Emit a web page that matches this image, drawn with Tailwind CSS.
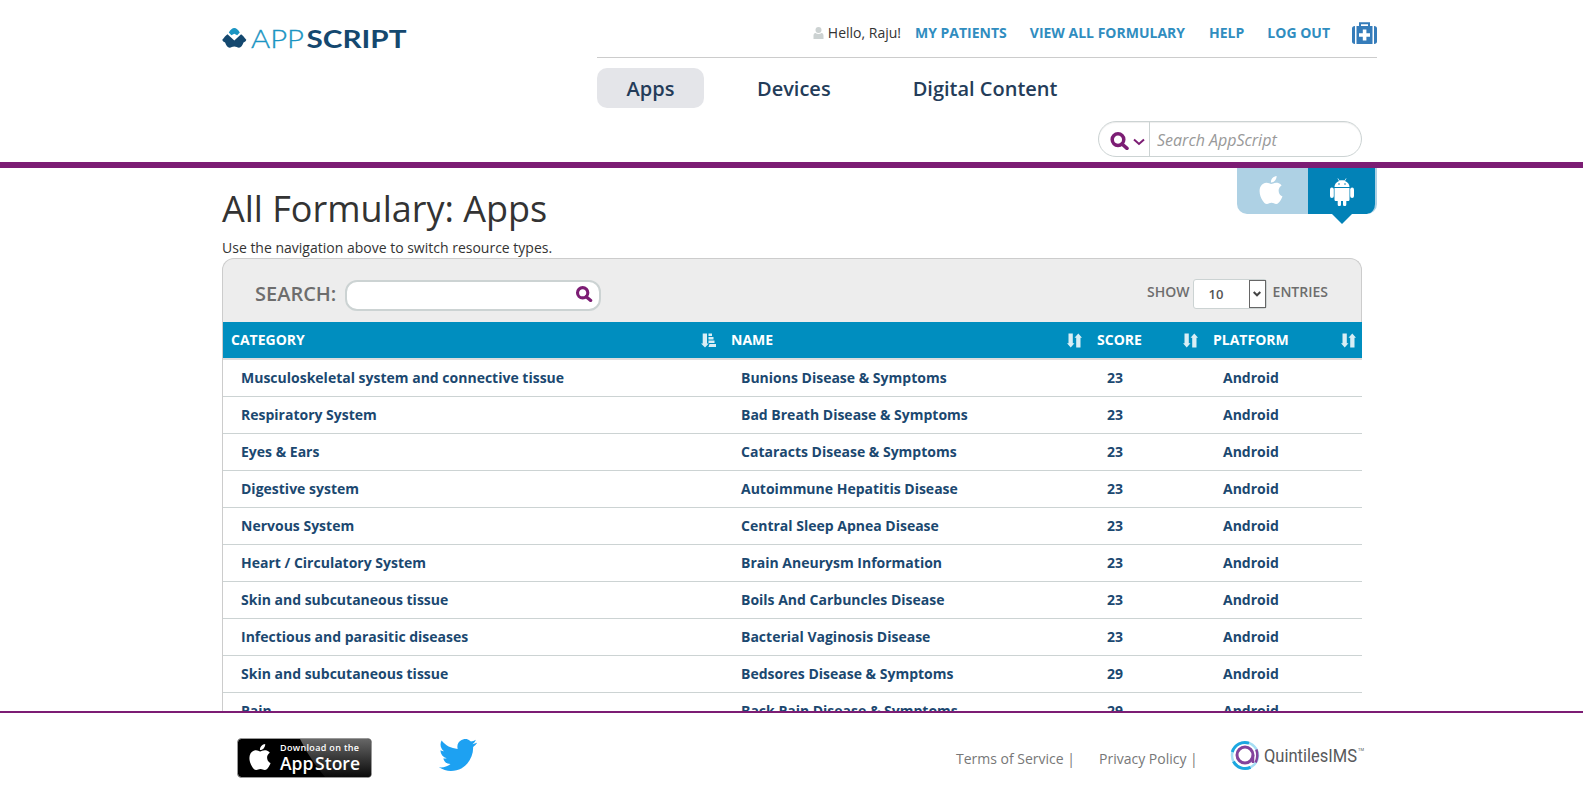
<!DOCTYPE html>
<html lang="en">
<head>
<meta charset="utf-8">
<title>AppScript - All Formulary</title>
<script src="https://cdn.jsdelivr.net/npm/@tailwindcss/browser@4"></script>
</head>
<body class="flex h-screen flex-col overflow-hidden bg-white font-['Open_Sans',sans-serif] text-sm text-[#333]">
<svg class="hidden">
  <symbol id="apple" viewBox="2 0 20 24"><path d="M12.152 6.896c-.948 0-2.415-1.078-3.96-1.04-2.04.027-3.91 1.183-4.961 3.014-2.117 3.675-.546 9.103 1.519 12.09 1.013 1.454 2.208 3.09 3.792 3.039 1.52-.065 2.09-.987 3.935-.987 1.831 0 2.35.987 3.96.948 1.637-.026 2.676-1.48 3.676-2.948 1.156-1.688 1.636-3.325 1.662-3.415-.039-.013-3.182-1.221-3.22-4.857-.026-3.04 2.48-4.494 2.597-4.559-1.429-2.09-3.623-2.324-4.39-2.376-2-.156-3.675 1.09-4.61 1.09zM15.53 3.83c.843-1.012 1.4-2.427 1.245-3.83-1.207.052-2.662.805-3.532 1.818-.78.896-1.454 2.338-1.273 3.714 1.338.104 2.715-.688 3.559-1.701"/></symbol>
  <symbol id="search" viewBox="0 0 19 18"><circle cx="8" cy="7.6" r="5.8" fill="none" stroke="currentColor" stroke-width="3.5"/><path d="M12 12l5 4.300" stroke="currentColor" stroke-width="3.600" stroke-linecap="round"/></symbol>
  <symbol id="sort" viewBox="0 0 15 15"><path d="M1.500.5h4.300v9.700h1.700L3.700 14.500 0 10.200h1.500zM9.200 14.500h4.300V4.800H15L11.300.5 7.500 4.800h1.700z" fill="currentColor"/></symbol>
  <symbol id="sorted" viewBox="0 0 15 15"><path d="M1.700.5H6v10h1.800L4 14.500 0 10.500h1.700zM7.500.5H11v2.500H7.500zM7.500 4h5v2.500h-5zM7.500 7.500h6V10h-6zM8.500 11H15v3H7.500z" fill="currentColor"/></symbol>
</svg>

<header class="h-[168px] shrink-0 border-b-6 border-[#7c1d74]">
  <div class="mx-auto flex w-[1171px] justify-between pl-4">
    <svg class="mt-[26px] h-6 w-[194px]" viewBox="0 0 194 24">
      <path d="M6.800 6.500C8.500 3.500 10.300 2 12.300 2s3.800 1.500 5.500 4.500l-2.600 2.800-2.900-1.500-2.900 1.500z" fill="#1b95c3"/>
      <path d="M5.500 8.200L12.300 14.500l6.800-6.300c1.500 1 3.500 3.300 5.200 5.600-.3 1.700-1.500 1.800-2.800 2.800-1 2.800-2.600 5.200-4.500 5.200-1.600 0-2.800-1.200-4.700-1.200s-3.100 1.200-4.700 1.200c-1.900 0-3.500-2.400-4.500-5.200C1.800 15.600.6 15.500.3 13.800 2 11.500 4 9.200 5.500 8.200z" fill="#14486f"/>
      <text x="29" y="21.500" textLength="53" lengthAdjust="spacingAndGlyphs" font-family="Lato" font-weight="300" font-size="25" fill="#1b95c3" stroke="#1b95c3" stroke-width=".3">APP</text>
      <text x="84.500" y="21.500" textLength="100" lengthAdjust="spacingAndGlyphs" font-family="Lato" font-weight="700" font-size="25" fill="#14486f">SCRIPT</text>
    </svg>
    <div class="w-[780px]">
      <div class="flex h-[58px] items-center justify-end border-b border-[#ccc] pt-2 font-bold text-[#308dbf]">
        <svg class="mr-1 h-3 w-[11px]" viewBox="0 0 10 12" fill="#ccd2d2"><circle cx="5" cy="3" r="3"/><path d="M0 12V8.500C0 6.500 1.500 6 2 6c1.500 1.400 4.500 1.400 6 0 .5 0 2 .5 2 2.500V12z"/></svg>
        <span class="mr-[14px] font-normal text-[#333]">Hello, Raju!</span>
        <a class="mr-[23px]">MY PATIENTS</a><a class="mr-6">VIEW ALL FORMULARY</a><a class="mr-[23px]">HELP</a><a>LOG OUT</a>
        <svg class="ml-[22px] h-[22px] w-[25px]" viewBox="0 0 25 22"><path d="M8 5V1.200h9V5" fill="none" stroke="#357cba" stroke-width="2"/><path d="M3 4v18C1 22 0 21 0 19.500V6.500C0 5 1 4 3 4zM4.500 4h16v18h-16zM22 4c2 0 3 1 3 2.500v13c0 1.500-1 2.500-3 2.500z" fill="#357cba"/><path d="M10.800 7.500h3.600v3.700H18v3.600h-3.600v3.700h-3.600v-3.700H7v-3.600h3.800z" fill="#fff"/></svg>
      </div>
      <nav class="mt-[10px] flex h-10 items-center text-xl font-semibold text-[#243c59]">
        <a class="flex h-10 w-[107px] items-center justify-center rounded-[10px] bg-[#e4e5e9] pt-0.5">Apps</a>
        <a class="ml-[53px] pt-0.5">Devices</a><a class="ml-[82px] pt-0.5">Digital Content</a>
      </nav>
      <div class="mt-[13px] ml-[501px] flex h-9 w-[264px] items-center rounded-[18px] border border-[#ccd3d3] shadow-[inset_0_1px_1px_#eee]">
        <svg class="ml-[11px] mt-[3px] h-[18px] w-[19px] text-[#7c1d74]"><use href="#search"/></svg>
        <svg class="ml-1 mt-1.5 h-[8px] w-[12px]" viewBox="0 0 12 8"><path d="M1 1.500l5 4.500 5-4.500" fill="none" stroke="#7c1d74" stroke-width="2"/></svg>
        <span class="ml-[4px] flex h-full items-center border-l border-[#ccd3d3] pl-[7px] pt-0.5 text-base italic text-[#999]">Search AppScript</span>
      </div>
    </div>
  </div>
</header>

<main class="mx-auto min-h-0 w-[1171px] flex-1 overflow-hidden pl-4">
  <div class="flex h-[90px] justify-between">
    <div>
      <h1 class="mt-[21px] text-4xl leading-10">All Formulary: Apps</h1>
      <p class="mt-[9px] leading-5">Use the navigation above to switch resource types.</p>
    </div>
    <div class="flex h-[56px] w-[140px]">
      <div class="flex h-[46px] w-[71px] items-center justify-center rounded-bl-[10px] bg-[#aed1e4] text-white"><svg class="mr-1 mb-0.5 h-[28px] w-6" fill="#fff"><use href="#apple"/></svg></div>
      <div class="relative flex h-[46px] w-[69px] items-center justify-center rounded-br-[10px] border-r-2 border-[#aed1e4] bg-[#0282b7]">
        <svg class="mt-[2px] h-[28px] w-6" viewBox="0 0 24 28" fill="#fff"><path d="M4.500 9c0-3 2-5 4.500-6L7.500.5l.5-.3L9.500 2.600c1.500-.6 3.500-.6 5 0L16 .2l.5.3L15 3c2.500 1 4.500 3 4.500 6zM4.500 10h15v11.500c0 1-.7 1.500-1.500 1.500h-1.700v3.500a1.500 1.500 0 01-3.300 0V23h-2v3.500a1.500 1.500 0 01-3.300 0V23H6c-.8 0-1.500-.5-1.500-1.500z"/><rect y="9.500" width="3.800" height="10.500" rx="1.900"/><rect x="20.200" y="9.500" width="3.800" height="10.500" rx="1.900"/><circle cx="9" cy="6" r=".8" fill="#0282b7"/><circle cx="15" cy="6" r=".8" fill="#0282b7"/></svg>
        <svg class="absolute left-[24px] top-[46px] h-[10px] w-5" viewBox="0 0 20 10"><path d="M0 0h20L10 10z" fill="#0282b7"/></svg>
      </div>
    </div>
  </div>

  <section class="w-[1140px]">
    <div class="flex h-16 items-center justify-between rounded-t-[12px] border-x border-t border-[#ccc] bg-[#ededed] pl-8 pr-[33px] font-semibold text-[#6d6d6d]">
      <div class="flex items-center pt-[9px]">
        <label class="text-xl leading-6 -mt-[3px]">SEARCH:</label>
        <div class="ml-[9px] flex h-[31px] w-[256px] items-center justify-end rounded-[12px] border-2 border-[#ccd3d3] bg-white pr-1.5"><svg class="mb-0.5 h-4 w-[18px] text-[#7c1d74]"><use href="#search"/></svg></div>
      </div>
      <div class="flex items-center pt-[6px]">
        <span class="-mt-[3px]">SHOW</span>
        <div class="ml-[3px] mr-[6px] flex h-[30px] w-[74px] items-center justify-between rounded-[3px] border border-[#ccd3d3] bg-white pl-[15px] text-[13px] text-[#555]"><span class="pt-0.5">10</span><span class="flex h-[28px] w-[17px] items-center justify-center border border-[#666] bg-white"><svg class="h-[6px] w-[8px]" viewBox="0 0 8 6"><path d="M.7 1L4 4.300 7.300 1" fill="none" stroke="#444" stroke-width="2"/></svg></span></div>
        <span class="-mt-[3px]">ENTRIES</span>
      </div>
    </div>
    <div class="border-l border-[#ccc]">
      <div class="grid h-[38px] grid-cols-[500px_366px_116px_1fr] items-center border-b-2 border-[#ddd] bg-[#008ebf] font-bold text-white">
        <div class="flex items-center justify-between pl-2 pr-[7px]">CATEGORY<svg class="h-[15px] w-[15px] opacity-85"><use href="#sorted"/></svg></div>
        <div class="flex items-center justify-between pl-2 pr-[7px]">NAME<svg class="h-[15px] w-[15px] opacity-85"><use href="#sort"/></svg></div>
        <div class="flex items-center justify-between pl-2 pr-[7px]">SCORE<svg class="h-[15px] w-[15px] opacity-85"><use href="#sort"/></svg></div>
        <div class="flex items-center justify-between pl-2 pr-[6px]">PLATFORM<svg class="h-[15px] w-[15px] opacity-85"><use href="#sort"/></svg></div>
      </div>
      <div id="rows" class="font-bold text-[#1b4870]"></div>
    </div>
  </section>
</main>

<footer class="h-[80px] shrink-0 border-t-2 border-[#7c1d74] bg-white">
  <div class="mx-auto flex w-[1171px] items-start pl-[31px] text-[#777]">
    <svg class="mt-[25px] h-10 w-[135px]" viewBox="0 0 135 40">
      <defs><linearGradient id="gloss" x1="0" y1="0" x2="0" y2="1"><stop offset="0" stop-color="#666"/><stop offset="1" stop-color="#0a0a0a"/></linearGradient></defs>
      <rect x=".5" y=".5" width="134" height="39" rx="4" fill="#000" stroke="#999"/>
      <path d="M63 1h68q3 0 3 3v32q0 3-3 3H88Q72 20 63 1z" fill="url(#gloss)"/>
      <use href="#apple" x="12" y="6" width="22" height="26" fill="#fff"/>
      <text x="43" y="13" textLength="79" font-family="Open Sans" font-weight="600" font-size="9" fill="#fff">Download on the</text>
      <text x="43" y="32" textLength="80" lengthAdjust="spacingAndGlyphs" font-family="Open Sans" font-weight="600" font-size="18.500" word-spacing="-3" fill="#fff">App Store</text>
    </svg>
    <svg class="mt-[26px] ml-[67px] h-[32px] w-[38px]" viewBox="0 2.200 24 19.600" preserveAspectRatio="none" fill="#1da1f2"><path d="M23.953 4.570a10 10 0 01-2.825.775 4.958 4.958 0 002.163-2.723c-.951.555-2.005.959-3.127 1.184a4.920 4.920 0 00-8.384 4.482C7.690 8.095 4.067 6.130 1.640 3.162a4.822 4.822 0 00-.666 2.475c0 1.710.870 3.213 2.188 4.096a4.904 4.904 0 01-2.228-.616v.060a4.923 4.923 0 003.946 4.827 4.996 4.996 0 01-2.212.085 4.936 4.936 0 004.604 3.417 9.867 9.867 0 01-6.102 2.105c-.390 0-.779-.023-1.170-.067a13.995 13.995 0 007.557 2.209c9.053 0 13.998-7.496 13.998-13.985 0-.210 0-.420-.015-.630A9.935 9.935 0 0024 4.590z"/></svg>
    <span class="ml-[479px] mt-[36px]">Terms of Service |</span>
    <span class="ml-[24px] mt-[36px]">Privacy Policy |</span>
    <svg class="ml-[32px] mt-[27px] h-[32px] w-[136px] shrink-0" viewBox="0 0 136 32">
      <g fill="none"><circle cx="15" cy="15.500" r="13" stroke="#a5def4" stroke-width="2.500"/><path d="M2.300 12A13 13 0 0119 3.200M3.500 21.500A13 13 0 0020.500 27.300" stroke="#1ca7e0" stroke-width="3"/><circle cx="15" cy="15" r="8" stroke="#83439b" stroke-width="3"/><path d="M23 15v8M26.300 9.500c1.500 4 1.300 8.500-.6 13" stroke="#83439b" stroke-width="2.500"/></g>
      <text x="34" y="21.500" textLength="93" lengthAdjust="spacingAndGlyphs" font-family="Roboto" font-size="17.500" fill="#58595b">QuintilesIMS</text>
      <text x="128" y="11" font-family="Roboto" font-size="4" fill="#58595b">TM</text>
    </svg>
  </div>
</footer>
<script>
const rows = [
  ["Musculoskeletal system and connective tissue", "Bunions Disease & Symptoms", 23],
  ["Respiratory System", "Bad Breath Disease & Symptoms", 23],
  ["Eyes & Ears", "Cataracts Disease & Symptoms", 23],
  ["Digestive system", "Autoimmune Hepatitis Disease", 23],
  ["Nervous System", "Central Sleep Apnea Disease", 23],
  ["Heart / Circulatory System", "Brain Aneurysm Information", 23],
  ["Skin and subcutaneous tissue", "Boils And Carbuncles Disease", 23],
  ["Infectious and parasitic diseases", "Bacterial Vaginosis Disease", 23],
  ["Skin and subcutaneous tissue", "Bedsores Disease & Symptoms", 29],
  ["Pain", "Back Pain Disease & Symptoms", 29],
];
for (const r of rows) {
  const row = document.createElement("div");
  row.className = "grid h-[37px] grid-cols-[500px_366px_116px_1fr] items-center border-b border-[#ccd3d3]";
  for (const value of [...r, "Android"]) {
    const cell = document.createElement("div");
    cell.className = "pl-[18px]";
    cell.textContent = value;
    row.append(cell);
  }
  document.getElementById("rows").append(row);
}
</script>
</body>
</html>
